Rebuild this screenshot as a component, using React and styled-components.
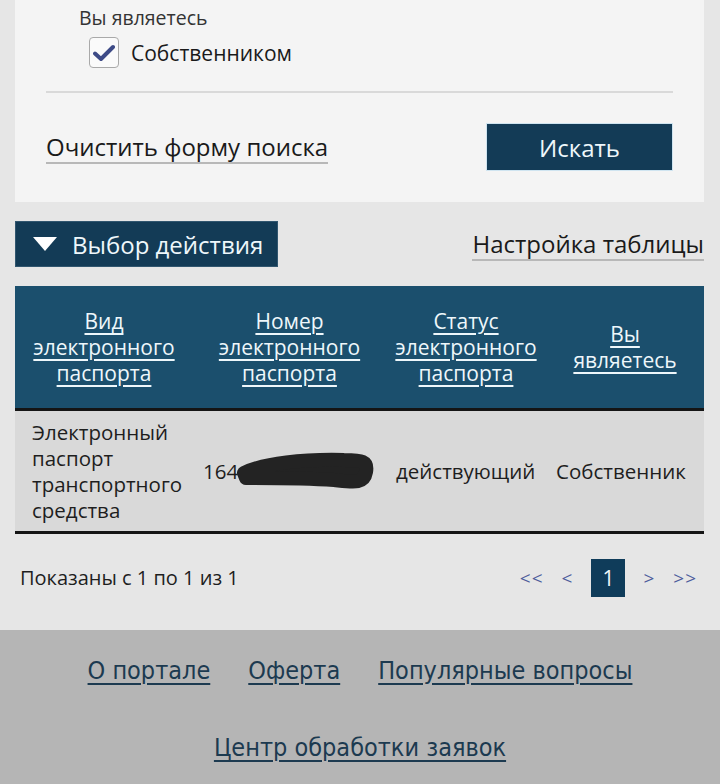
import React from "react";
import styled, { createGlobalStyle } from "styled-components";

const GlobalStyle = createGlobalStyle`
  html, body { margin: 0; padding: 0; background: #e6e6e6; }
  body { font-family: "Open Sans", "Noto Sans", sans-serif; color: #1a1a1a; }
  * { box-sizing: border-box; }
`;

const Page = styled.div`
  padding: 0 16px 0 15px;
`;

const Card = styled.section`
  background: #f4f4f4;
  padding: 5px 31px 31px 31px;
`;

const FieldLabel = styled.div`
  font-size: 19.5px;
  line-height: 26px;
  color: #333;
  margin-left: 33px;
`;

const CheckRow = styled.label`
  display: flex;
  align-items: center;
  gap: 12px;
  margin: 6px 0 0 43px;
  font-size: 21px;
  color: #1a1a1a;
`;

const CheckBox = styled.span`
  width: 30px;
  height: 31px;
  border: 1.5px solid #a9a9a9;
  border-radius: 4px;
  background: #fafafa;
  display: flex;
  align-items: center;
  justify-content: center;
`;

const Divider = styled.hr`
  border: none;
  border-top: 2px solid #d9d9d9;
  margin: 23px 0 0 0;
`;

const ActionRow = styled.div`
  display: flex;
  justify-content: space-between;
  align-items: center;
  margin-top: 30px;
`;

const TextLink = styled.a`
  font-size: 24px;
  color: #1a1a1a;
  text-decoration: none;
  border-bottom: 2px solid #b8b8b8;
  line-height: 31px;
`;

const PrimaryButton = styled.button`
  width: 187px;
  height: 48px;
  border: 1px solid #cfe4f0;
  background: #133b56;
  color: #eef7fb;
  font-family: inherit;
  font-size: 24px;
  cursor: pointer;
`;

const Toolbar = styled.div`
  display: flex;
  justify-content: space-between;
  align-items: center;
  margin-top: 19px;
`;

const ActionButton = styled.button`
  display: flex;
  align-items: center;
  gap: 14px;
  width: 263px;
  height: 46px;
  padding: 0 0 0 16px;
  border: 1px solid #31566f;
  background: #133b56;
  color: #eef7fb;
  font-family: inherit;
  font-size: 24px;
`;

const Table = styled.table`
  width: 100%;
  margin-top: 19px;
  border-collapse: collapse;
  table-layout: fixed;
`;

const HeadCell = styled.th`
  width: ${(p) => p.$w}px;
  height: 123px;
  background: #1b4f6d;
  padding: 0 2px;
  font-weight: 400;
  font-size: 21px;
  line-height: 26px;
  text-align: center;
  vertical-align: middle;
  border-bottom: 3px solid #151515;
`;

const HeadLink = styled.a`
  color: #eef7fb;
  text-decoration: underline;
  text-underline-offset: 4px;
  text-decoration-thickness: 1.5px;
`;

const BodyCell = styled.td`
  background: #d9d9d9;
  height: 123px;
  padding: 0 4px 0 ${(p) => p.$pl || 10}px;
  font-size: 20.5px;
  line-height: 26px;
  color: #1e1e1e;
  vertical-align: middle;
  border-bottom: 3px solid #151515;
  white-space: ${(p) => (p.$nowrap ? "nowrap" : "normal")};
`;

const NumberWrap = styled.span`
  display: inline-flex;
  align-items: center;
`;

const Footer = styled.div`
  display: flex;
  justify-content: space-between;
  align-items: flex-start;
  height: 96px;
  padding: 25px 7px 0 5px;
`;

const Counter = styled.div`
  font-size: 20px;
  line-height: 38px;
  color: #1e1e1e;
`;

const Pager = styled.nav`
  display: flex;
  align-items: center;
  gap: 18px;
`;

const PageArrow = styled.a`
  color: #4d5c9c;
  font-size: 19px;
  letter-spacing: 1px;
`;

const PageCurrent = styled.span`
  width: 34px;
  height: 38px;
  background: #0f3c5a;
  color: #eef7fb;
  font-size: 21px;
  display: flex;
  align-items: center;
  justify-content: center;
`;

const SiteFooter = styled.footer`
  background: #b5b5b5;
  min-height: 160px;
  padding-top: 26px;
  display: flex;
  flex-direction: column;
  align-items: center;
  gap: 48px;
`;

const FooterRow = styled.div`
  display: flex;
  gap: 38px;
`;

const FooterLink = styled.a`
  font-family: "DejaVu Sans Condensed", "DejaVu Sans", sans-serif;
  font-stretch: condensed;
  font-size: 25px;
  color: #1c3a50;
  text-decoration: underline;
  text-underline-offset: 4px;
  text-decoration-thickness: 2px;
`;

const Check = () => (
  <svg width="22" height="18" viewBox="0 0 22 18">
    <path d="M2 9.5 L8 15 L20 3" fill="none" stroke="#3d4a86" strokeWidth="4" strokeLinecap="round" strokeLinejoin="round" />
  </svg>
);

const Caret = () => (
  <svg width="26" height="16" viewBox="0 0 26 16">
    <path d="M1 1 H25 L13 15 Z" fill="#ffffff" />
  </svg>
);

const Redaction = () => (
  <svg width="142" height="40" viewBox="0 0 142 40" style={{ marginLeft: -4 }}>
    <path d="M10 22 C30 12 70 8 110 9 C128 9 134 10 132 21 C130 33 120 31 100 29 C70 27 40 27 12 27 Z" fill="#232323" stroke="#232323" strokeWidth="14" strokeLinejoin="round" />
  </svg>
);

const headers = [
  { w: 178, label: ["Вид", "электронного", "паспорта"] },
  { w: 193, label: ["Номер", "электронного", "паспорта"] },
  { w: 160, label: ["Статус", "электронного", "паспорта"] },
  { w: 158, label: ["Вы", "являетесь"] },
];

export default function App() {
  return (
    <>
      <GlobalStyle />
      <Page>
        <Card>
          <FieldLabel>Вы являетесь</FieldLabel>
          <CheckRow>
            <CheckBox>
              <Check />
            </CheckBox>
            Собственником
          </CheckRow>
          <Divider />
          <ActionRow>
            <TextLink>Очистить форму поиска</TextLink>
            <PrimaryButton>Искать</PrimaryButton>
          </ActionRow>
        </Card>

        <Toolbar>
          <ActionButton>
            <Caret />
            Выбор действия
          </ActionButton>
          <TextLink>Настройка таблицы</TextLink>
        </Toolbar>

        <Table>
          <thead>
            <tr>
              {headers.map((h) => (
                <HeadCell key={h.label.join(" ")} $w={h.w}>
                  <HeadLink>
                    {h.label.map((l, i) => (
                      <React.Fragment key={l}>
                        {i > 0 && <br />}
                        {l}
                      </React.Fragment>
                    ))}
                  </HeadLink>
                </HeadCell>
              ))}
            </tr>
          </thead>
          <tbody>
            <tr>
              <BodyCell $pl={17}>Электронный паспорт транспортного средства</BodyCell>
              <BodyCell>
                <NumberWrap>
                  164
                  <Redaction />
                </NumberWrap>
              </BodyCell>
              <BodyCell $nowrap>действующий</BodyCell>
              <BodyCell $nowrap>Собственник</BodyCell>
            </tr>
          </tbody>
        </Table>

        <Footer>
          <Counter>Показаны с 1 по 1 из 1</Counter>
          <Pager>
            <PageArrow>&lt;&lt;</PageArrow>
            <PageArrow>&lt;</PageArrow>
            <PageCurrent>1</PageCurrent>
            <PageArrow>&gt;</PageArrow>
            <PageArrow>&gt;&gt;</PageArrow>
          </Pager>
        </Footer>
      </Page>
      <SiteFooter>
        <FooterRow>
          <FooterLink>О портале</FooterLink>
          <FooterLink>Оферта</FooterLink>
          <FooterLink>Популярные вопросы</FooterLink>
        </FooterRow>
        <FooterRow>
          <FooterLink>Центр обработки заявок</FooterLink>
        </FooterRow>
      </SiteFooter>
    </>
  );
}
